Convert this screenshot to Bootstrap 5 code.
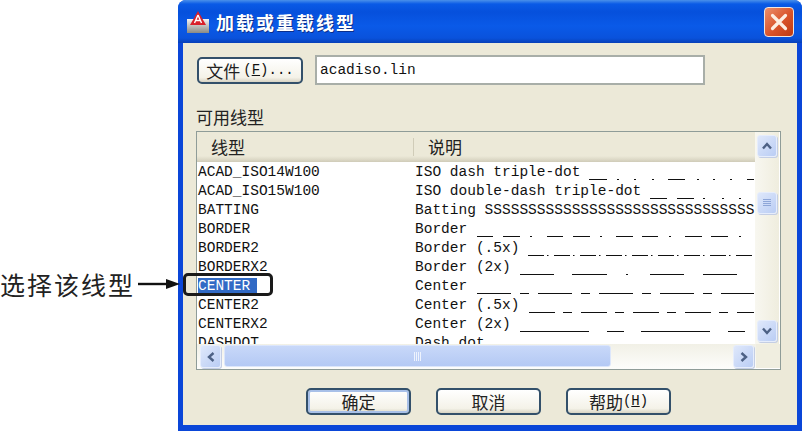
<!DOCTYPE html>
<html lang="zh">
<head>
<meta charset="utf-8">
<title>加载或重载线型</title>
<link href="https://cdn.jsdelivr.net/npm/bootstrap@5.3.0/dist/css/bootstrap.min.css" rel="stylesheet">
<style>
html,body{margin:0;height:431px;overflow:hidden;background:#fff}
body{font-family:"Noto Sans CJK SC","Liberation Sans",sans-serif;color:#111}
.stage{position:relative;width:802px;height:431px;padding-left:178px}
.xp-win{width:624px;height:431px;background:#0a46d8;border-radius:8px 8px 0 0;padding:0 5px 6px}
.xp-title{height:43px;margin:0 -5px;padding:0 9px;border-radius:8px 8px 0 0;background:linear-gradient(180deg,#4a90ea 0,#0a5ae6 4px,#0650dc 12px,#0a5ae8 26px,#0a52dc 38px,#0740b8 43px)}
.xp-title-text{font-size:18px;font-weight:700;letter-spacing:2px;color:#fff;text-shadow:1px 1px 0 #0b2f8c;margin-left:7px;line-height:1}
.xp-close{width:30px;height:30px;margin-left:auto;margin-right:-1px;border:1px solid #f2e6df;border-radius:4px;background:linear-gradient(135deg,#ec8f6c,#d9532a 55%,#bf3a12)}
.xp-body{height:382px;background:#ece9d8;padding:12px 15px 0 13px}
.mono{font-family:"Liberation Mono","Noto Sans CJK SC",monospace;font-size:14.5px;line-height:19px;color:#111}
.xp-btn{height:27px;width:105px;padding:0;border:2px solid #33506a;border-radius:5px;background:linear-gradient(180deg,#fff,#f4f2e8 80%,#d8d4c4);font-size:17px;line-height:1;color:#222;display:flex;align-items:center;justify-content:center}
.xp-btn:hover{background:linear-gradient(180deg,#fff,#f4f2e8 80%,#d8d4c4);border-color:#33506a;color:#222}
.xp-btn-file{margin-left:1px;width:106px}
.xp-btn-file .mono{font-size:14px;margin-left:3px}
.xp-btn-help .mono{font-size:14px}
.xp-btn-default{box-shadow:inset 0 0 0 2px #a8c0e8}
.xp-input{width:390px;height:30px;margin-left:12px;border:2px solid #a8aea8;background:#fff;padding:0 3px;line-height:26px;border-radius:0}
.xp-input:focus{box-shadow:none;border-color:#a8aea8}
.xp-label{height:24px;margin-top:20px;margin-bottom:2px;font-size:17px;line-height:24px;color:#222}
.xp-list{width:585px;height:239px;border:1px solid #8f9c98;background:#fff}
.xp-listmain{height:212px}
.xp-listcontent{width:558px}
.xp-head{height:30px;background:linear-gradient(180deg,#ece9d8 0,#ece9d8 80%,#dcd8c6 92%,#cfcbb8);font-size:17px;color:#222}
.xp-head-a{width:217px;padding-left:14px;border-right:1px solid #d0ccb8;height:18px;line-height:18px}
.xp-head-b{padding-left:14px;height:18px;line-height:18px}
.xp-rows{height:182px;overflow:hidden}
.xp-row{height:19px;padding-left:1px;padding-top:1px;white-space:nowrap}
.xp-name{width:217px;flex:none}
.xp-sel{background:#316ac5;color:#fff;padding-right:7px;display:inline-block;line-height:16px}
.xp-desc{display:grid;width:340px;height:19px;overflow:hidden}
.xp-desc>*{grid-area:1/1}
.xp-desc svg{width:340px;height:19px}
.xp-desc path,.xp-desc line{stroke:#111;stroke-width:1;fill:none}
.xp-vs{width:24px;padding:3px 2px 2px;background:linear-gradient(90deg,#f8f7f0,#efedde)}
.xp-sb{width:20px;height:22px;flex:none;border:1px solid #e6edfc;border-radius:3px;background:linear-gradient(135deg,#dfe8fb,#bacdf4);box-shadow:1px 1px 0 #c4cee4}
.xp-sb svg{width:12px;height:12px}
.xp-vthumb{margin-top:35px}
.xp-hs{height:25px;padding:1px 0 0 3px;background:linear-gradient(180deg,#f1f0e6,#fdfdfb)}
.xp-hb{width:21px;height:23px}
.xp-hthumb{width:387px;height:22px;margin-left:3px;border:1px solid #dce6fb;border-radius:3px;background:linear-gradient(180deg,#c8d8f9,#b4c9f4)}
.xp-hthumb svg{width:10px;height:9px}
.xp-hright{margin-left:auto;margin-right:2px}
.xp-corner{width:24px;height:24px;background:#f0eee0}
.xp-foot{margin-top:18px;padding-left:110px;gap:25px}
.xp-note{position:absolute;left:0;top:268px;font-size:25px;letter-spacing:2px;line-height:32px;color:#222;white-space:nowrap}
.xp-arrow{position:absolute;left:138px;top:278px;width:42px;height:12px}
.xp-mark{position:absolute;left:183px;top:273px;width:90px;height:23px;border:3px solid #1a1a1a;border-radius:5px}
</style>
</head>
<body>
<div class="stage">
  <div class="xp-win d-flex flex-column">
    <div class="xp-title d-flex align-items-center">
      <svg width="22" height="22" viewBox="0 0 22 22" aria-hidden="true">
        <defs><linearGradient id="g" x1="0" y1="0" x2="0" y2="1"><stop offset="0" stop-color="#f4f4f4"/><stop offset="1" stop-color="#8a8a84"/></linearGradient></defs>
        <rect x="0" y="8" width="22" height="14" fill="url(#g)"/>
        <path d="M11 0L19 14H3Z" fill="#d9202a"/>
        <path d="M11 4L7.5 12M11 4L14.5 12M8.8 9.5H13.2" stroke="#fff" stroke-width="1.4" fill="none"/>
      </svg>
      <span class="xp-title-text">加载或重载线型</span>
      <div class="xp-close d-flex align-items-center justify-content-center">
        <svg width="18" height="18" viewBox="0 0 18 18" aria-hidden="true"><path d="M2.5 2.5L15.5 15.5M15.5 2.5L2.5 15.5" stroke="#fdeee2" stroke-width="3.2" stroke-linecap="round"/></svg>
      </div>
    </div>
    <div class="xp-body">
      <div class="d-flex align-items-center">
        <button type="button" class="btn xp-btn xp-btn-file">文件<span class="mono">(<u>F</u>)...</span></button>
        <input class="form-control mono xp-input" value="acadiso.lin">
      </div>
      <div class="xp-label">可用线型</div>
      <div class="xp-list d-flex flex-column">
        <div class="xp-listmain d-flex">
          <div class="xp-listcontent d-flex flex-column">
            <div class="xp-head d-flex align-items-center">
              <div class="xp-head-a">线型</div>
              <div class="xp-head-b">说明</div>
            </div>
            <div class="xp-rows mono">
              <div class="xp-row d-flex"><div class="xp-name">ACAD_ISO14W100</div><div class="xp-desc"><span>ISO dash triple-dot</span><svg viewBox="415 0 340 19"><path d="M589 16.5h18M617 16.5h2M634 16.5h2M652 16.5h2M668 16.5h17M697 16.5h2M713 16.5h2M730 16.5h2M747 16.5h7"/></svg></div></div>
              <div class="xp-row d-flex"><div class="xp-name">ACAD_ISO15W100</div><div class="xp-desc"><span>ISO double-dash triple-dot</span><svg viewBox="415 0 340 19"><path d="M650 16.5h17M677 16.5h17M703 16.5h2M722 16.5h2M739 16.5h2"/></svg></div></div>
              <div class="xp-row d-flex"><div class="xp-name">BATTING</div><div class="xp-desc"><span>Batting SSSSSSSSSSSSSSSSSSSSSSSSSSSSSSS</span></div></div>
              <div class="xp-row d-flex"><div class="xp-name">BORDER</div><div class="xp-desc"><span>Border</span><svg viewBox="415 0 340 19"><path d="M477 16.5h16M503 16.5h17M530 16.5h2M547 16.5h16M573 16.5h17M600 16.5h2M616 16.5h17M642 16.5h16M669 16.5h2M685 16.5h17M711 16.5h17M739 16.5h2"/></svg></div></div>
              <div class="xp-row d-flex"><div class="xp-name">BORDER2</div><div class="xp-desc"><span>Border (.5x)</span><svg viewBox="415 0 340 19"><line x1="528" y1="16.5" x2="754" y2="16.5" stroke-dasharray="16 3 1.5 5.5"/></svg></div></div>
              <div class="xp-row d-flex"><div class="xp-name">BORDERX2</div><div class="xp-desc"><span>Border (2x)</span><svg viewBox="415 0 340 19"><path d="M520 16.5h34M572 16.5h35M626 16.5h2M650 16.5h34M703 16.5h34"/></svg></div></div>
              <div class="xp-row d-flex"><div class="xp-name"><span class="xp-sel">CENTER</span></div><div class="xp-desc"><span>Center</span><svg viewBox="415 0 340 19"><line x1="477" y1="16.5" x2="754" y2="16.5" stroke-dasharray="34 9 9 9"/></svg></div></div>
              <div class="xp-row d-flex"><div class="xp-name">CENTER2</div><div class="xp-desc"><span>Center (.5x)</span><svg viewBox="415 0 340 19"><line x1="529" y1="16.5" x2="754" y2="16.5" stroke-dasharray="26 8 9 9"/></svg></div></div>
              <div class="xp-row d-flex"><div class="xp-name">CENTERX2</div><div class="xp-desc"><span>Center (2x)</span><svg viewBox="415 0 340 19"><line x1="520" y1="16.5" x2="747" y2="16.5" stroke-dasharray="69 18 17 17"/></svg></div></div>
              <div class="xp-row d-flex"><div class="xp-name">DASHDOT</div><div class="xp-desc"><span>Dash dot</span></div></div>
            </div>
          </div>
          <div class="xp-vs d-flex flex-column">
            <div class="xp-sb d-flex align-items-center justify-content-center"><svg viewBox="0 0 12 12"><path d="M2 8.5L6 4L10 8.5" stroke="#4d6185" stroke-width="2.4" fill="none"/></svg></div>
            <div class="xp-sb xp-vthumb d-flex align-items-center justify-content-center"><svg viewBox="0 0 12 12"><path d="M2 2.5h8M2 4.5h8M2 6.5h8M2 8.5h8" stroke="#8ea6d8" stroke-width="1"/></svg></div>
            <div class="xp-sb mt-auto d-flex align-items-center justify-content-center"><svg viewBox="0 0 12 12"><path d="M2 3.5L6 8L10 3.5" stroke="#4d6185" stroke-width="2.4" fill="none"/></svg></div>
          </div>
        </div>
        <div class="d-flex">
          <div class="xp-hs d-flex flex-grow-1">
            <div class="xp-sb xp-hb d-flex align-items-center justify-content-center"><svg viewBox="0 0 12 12"><path d="M8.5 2L4 6L8.5 10" stroke="#4d6185" stroke-width="2.4" fill="none"/></svg></div>
            <div class="xp-hthumb d-flex align-items-center justify-content-center"><svg viewBox="0 0 10 9"><path d="M1.5 0v9M3.5 0v9M5.5 0v9M7.5 0v9" stroke="#eef3fd" stroke-width="1"/></svg></div>
            <div class="xp-sb xp-hb xp-hright d-flex align-items-center justify-content-center"><svg viewBox="0 0 12 12"><path d="M3.5 2L8 6L3.5 10" stroke="#4d6185" stroke-width="2.4" fill="none"/></svg></div>
          </div>
          <div class="xp-corner"></div>
        </div>
      </div>
      <div class="xp-foot d-flex">
        <button type="button" class="btn xp-btn xp-btn-default">确定</button>
        <button type="button" class="btn xp-btn">取消</button>
        <button type="button" class="btn xp-btn xp-btn-help">帮助<span class="mono">(<u>H</u>)</span></button>
      </div>
    </div>
  </div>
  <div class="xp-note">选择该线型</div>
  <svg class="xp-arrow" viewBox="0 0 42 12" aria-hidden="true"><path d="M0 6H30" stroke="#111" stroke-width="2.4"/><path d="M28 1L42 6L28 11Z" fill="#111"/></svg>
  <div class="xp-mark"></div>
</div>
<script src="https://cdn.jsdelivr.net/npm/bootstrap@5.3.0/dist/js/bootstrap.bundle.min.js"></script>
</body>
</html>
